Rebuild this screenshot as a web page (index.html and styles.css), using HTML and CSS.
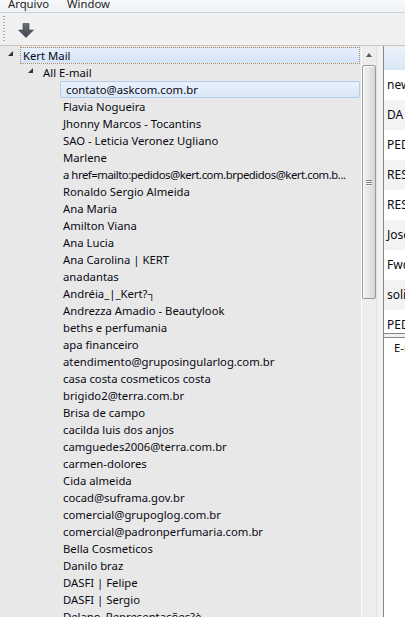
FILE: index.html
```html
<!DOCTYPE html>
<html>
<head>
<meta charset="utf-8">
<link rel="stylesheet" href="styles.css">
</head>
<body>
<div class="app">
  <div class="menubar">
    <span class="menu">Arquivo</span>
    <span class="menu">Window</span>
  </div>
  <div class="toolbar">
    <div class="grip"></div>
    <button class="tbtn" title="Download">
      <svg width="16" height="15" viewBox="0 0 16 15">
        <defs>
          <linearGradient id="ag" x1="0" y1="0" x2="0" y2="1">
            <stop offset="0" stop-color="#6b727a"/>
            <stop offset="1" stop-color="#3b4148"/>
          </linearGradient>
        </defs>
        <path d="M5 0.5 H11 V7 H15.5 L8 14.5 L0.5 7 H5 Z" fill="url(#ag)" stroke="#3a3f45" stroke-width="0.6"/>
      </svg>
    </button>
  </div>
  <div class="main">
    <div class="tree">
      <div class="row l0"><span class="tw"><svg class="tri" width="5" height="5" viewBox="0 0 5 5"><polygon points="5,0 5,5 0,5" fill="#333"/></svg></span><span class="label focus">Kert Mail</span></div>
      <div class="row l1"><span class="tw"><svg class="tri" width="5" height="5" viewBox="0 0 5 5"><polygon points="5,0 5,5 0,5" fill="#333"/></svg></span><span class="label">All E-mail</span></div>
      <div class="row l2"><span class="tw"></span><span class="label sel">contato@askcom.com.br</span></div>
      <div class="row l2"><span class="tw"></span><span class="label">Flavia Nogueira</span></div>
      <div class="row l2"><span class="tw"></span><span class="label">Jhonny Marcos - Tocantins</span></div>
      <div class="row l2"><span class="tw"></span><span class="label">SAO - Leticia Veronez Ugliano</span></div>
      <div class="row l2"><span class="tw"></span><span class="label">Marlene</span></div>
      <div class="row l2"><span class="tw"></span><span class="label tight">a href=mailto:pedidos@kert.com.brpedidos@kert.com.b...</span></div>
      <div class="row l2"><span class="tw"></span><span class="label">Ronaldo Sergio Almeida</span></div>
      <div class="row l2"><span class="tw"></span><span class="label">Ana Maria</span></div>
      <div class="row l2"><span class="tw"></span><span class="label">Amilton Viana</span></div>
      <div class="row l2"><span class="tw"></span><span class="label">Ana Lucia</span></div>
      <div class="row l2"><span class="tw"></span><span class="label">Ana Carolina | KERT</span></div>
      <div class="row l2"><span class="tw"></span><span class="label">anadantas</span></div>
      <div class="row l2"><span class="tw"></span><span class="label">Andréia_|_Kert?┐</span></div>
      <div class="row l2"><span class="tw"></span><span class="label">Andrezza Amadio - Beautylook</span></div>
      <div class="row l2"><span class="tw"></span><span class="label">beths e perfumania</span></div>
      <div class="row l2"><span class="tw"></span><span class="label">apa financeiro</span></div>
      <div class="row l2"><span class="tw"></span><span class="label">atendimento@gruposingularlog.com.br</span></div>
      <div class="row l2"><span class="tw"></span><span class="label">casa costa cosmeticos costa</span></div>
      <div class="row l2"><span class="tw"></span><span class="label">brigido2@terra.com.br</span></div>
      <div class="row l2"><span class="tw"></span><span class="label">Brisa de campo</span></div>
      <div class="row l2"><span class="tw"></span><span class="label">cacilda luis dos anjos</span></div>
      <div class="row l2"><span class="tw"></span><span class="label">camguedes2006@terra.com.br</span></div>
      <div class="row l2"><span class="tw"></span><span class="label">carmen-dolores</span></div>
      <div class="row l2"><span class="tw"></span><span class="label">Cida almeida</span></div>
      <div class="row l2"><span class="tw"></span><span class="label">cocad@suframa.gov.br</span></div>
      <div class="row l2"><span class="tw"></span><span class="label">comercial@grupoglog.com.br</span></div>
      <div class="row l2"><span class="tw"></span><span class="label">comercial@padronperfumaria.com.br</span></div>
      <div class="row l2"><span class="tw"></span><span class="label">Bella Cosmeticos</span></div>
      <div class="row l2"><span class="tw"></span><span class="label">Danilo braz</span></div>
      <div class="row l2"><span class="tw"></span><span class="label">DASFI | Felipe</span></div>
      <div class="row l2"><span class="tw"></span><span class="label">DASFI | Sergio</span></div>
      <div class="row l2"><span class="tw"></span><span class="label">Delano_Representações?è</span></div>
    </div>
    <div class="vscroll">
      <div class="sbtn"><svg width="6" height="4" viewBox="0 0 6 4"><polygon points="3,0 6,4 0,4" fill="#5a5a5a"/></svg></div>
      <div class="thumb"><span class="gripl"></span><span class="gripl"></span><span class="gripl"></span></div>
    </div>
    <div class="splitter"></div>
    <div class="right">
      <div class="list">
        <div class="lhead"></div>
        <div class="lrow">new</div>
        <div class="lrow alt">DA</div>
        <div class="lrow">PED</div>
        <div class="lrow alt">RES</div>
        <div class="lrow">RES</div>
        <div class="lrow alt">Jose</div>
        <div class="lrow">Fwd</div>
        <div class="lrow alt">solic</div>
        <div class="lrow">PED</div>
      </div>
      <div class="hsplit"></div>
      <div class="lower">
        <div class="ltab">E-mail</div>
      </div>
    </div>
  </div>
</div>
</body>
</html>
```
FILE: styles.css
```css
html, body {
  margin: 0;
  padding: 0;
}
body {
  width: 405px;
  height: 617px;
  overflow: hidden;
  background: #f0f0f0;
  font-family: "Noto Sans", "Open Sans", sans-serif;
  font-size: 11.3px;
  color: #0a0a14;
}
.app {
  display: flex;
  flex-direction: column;
  height: 617px;
}
.menubar {
  height: 12px;
  border-bottom: 1px solid #c9d2df;
  background: linear-gradient(#f7f8fa, #eef1f5);
  display: flex;
  padding-left: 8px;
  gap: 18px;
  overflow: hidden;
  flex: none;
}
.menu {
  line-height: 16px;
  margin-top: -4px;
  color: #1e1e1e;
}
.toolbar {
  height: 32px;
  border-bottom: 1px solid #c6c6c6;
  background: #f0f0f0;
  display: flex;
  align-items: flex-start;
  flex: none;
}
.grip {
  width: 2px;
  height: 27px;
  margin: 3px 0 0 3px;
  background: repeating-linear-gradient(to bottom, #a9a9a9 0 1px, #fafafa 1px 2px, transparent 2px 3px);
}
.tbtn {
  border: 0;
  padding: 0;
  margin: 10px 0 0 13px;
  background: transparent;
  width: 16px;
  height: 15px;
  display: block;
}
.tbtn svg {
  display: block;
}
.main {
  flex: 1;
  display: flex;
  min-height: 0;
}
.tree {
  width: 361px;
  background: #e8e8e8;
  padding-top: 1px;
  overflow: hidden;
  flex: none;
}
.row {
  height: 17px;
  display: flex;
  align-items: stretch;
  margin-right: 1px;
}
.l1 { padding-left: 20px; }
.l2 { padding-left: 40px; }
.tw {
  width: 20px;
  flex: none;
  position: relative;
}
.tri {
  position: absolute;
  left: 8px;
  top: 4px;
}
.label {
  flex: 1;
  min-width: 0;
  border: 1px solid transparent;
  padding: 0 2px;
  line-height: 15px;
  white-space: nowrap;
  overflow: hidden;
}
.tight {
  letter-spacing: -0.45px;
}
.focus {
  border: 1px dotted #b98a5e;
  background: linear-gradient(#e6f0fc, #d3e4f8);
}
.sel {
  border: 1px solid #b2cdec;
  border-radius: 2px;
  background: linear-gradient(#eaf1fb, #dae7f7);
  padding-left: 5px;
}
.vscroll {
  width: 14px;
  border-left: 1px solid #fbfbfb;
  background: #ededed;
  display: flex;
  flex-direction: column;
  align-items: center;
  padding-top: 1px;
  flex: none;
}
.sbtn {
  height: 18px;
  width: 14px;
  display: flex;
  align-items: center;
  justify-content: center;
}
.sbtn svg {
  display: block;
  margin-top: -3px;
}
.thumb {
  width: 12px;
  height: 232px;
  border: 1px solid #9a9a9a;
  border-radius: 2px;
  background: linear-gradient(to right, #f2f2f2, #e6e6e6 50%, #d6d6d6);
  box-shadow: inset 1px 1px 0 #fcfcfc;
  display: flex;
  flex-direction: column;
  align-items: center;
  justify-content: center;
  gap: 1px;
}
.gripl {
  display: block;
  width: 6px;
  height: 1px;
  background: #7e7e7e;
  box-shadow: 0 1px 0 #fafafa;
}
.splitter {
  width: 6px;
  background: #f0f0f0;
  border-left: 1px solid #e2e2e2;
  flex: none;
}
.right {
  flex: 1;
  border-left: 1px solid #828790;
  display: flex;
  flex-direction: column;
  min-width: 0;
  padding-top: 1px;
}
.list {
  height: 286px;
  background: #ffffff;
  overflow: hidden;
  flex: none;
}
.lhead {
  height: 23px;
  background: linear-gradient(#ebf3fc, #d9e6f6);
}
.lrow {
  height: 30px;
  line-height: 30px;
  padding-left: 3px;
  white-space: nowrap;
  overflow: hidden;
  font-size: 12px;
}
.alt {
  background: #f3f3f3;
}
.hsplit {
  height: 3px;
  border-top: 1px solid #828790;
  border-bottom: 1px solid #828790;
  background: #f0f0f0;
  flex: none;
}
.lower {
  flex: 1;
  background: #ffffff;
}
.ltab {
  padding: 2px 0 0 10px;
  line-height: 16px;
  white-space: nowrap;
}
```
